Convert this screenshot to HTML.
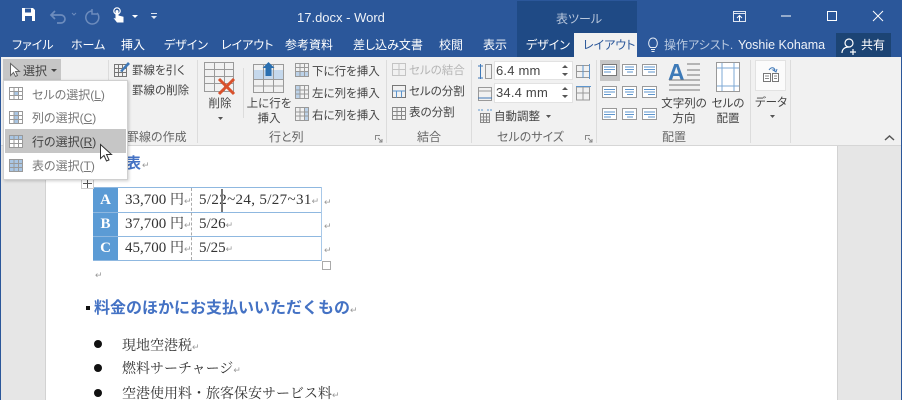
<!DOCTYPE html>
<html lang="ja"><head><meta charset="utf-8"><style>
html,body{margin:0;padding:0}
#r{position:relative;width:902px;height:400px;overflow:hidden;background:#e6e6e6;font-family:"Liberation Sans","Noto Sans CJK JP",sans-serif;color:#444}
#r div,#r span.a,#r svg{position:absolute}
.t{white-space:nowrap;font-size:12px;line-height:16px;font-feature-settings:"palt"}
.l{font-size:11.5px}
.w{color:#fff}
.c{text-align:center}
.sep{width:1px;background:#dcdcdc;top:60px;height:83px}
.g{color:#666;font-size:12px;line-height:14px;white-space:nowrap;top:130px;font-feature-settings:"palt"}
.s{font-family:"Liberation Serif","Noto Serif CJK SC","Noto Sans CJK JP",serif;color:#333;white-space:nowrap;font-size:15px;line-height:18px}
.j{font-size:14px}
.m{color:#999;font-size:9px;line-height:10px;font-family:"Liberation Sans",sans-serif}
</style></head><body><div id="r">

<div style="left:0;top:0;width:902px;height:57px;background:#2b579a"></div>
<div style="left:517px;top:1px;width:120px;height:56px;background:#1f4a85"></div>
<div class="t" style="left:556px;top:11px;color:#b9c7dc;font-size:12px">表ツール</div>
<div class="t w" style="left:297px;top:9px;font-size:13px;line-height:18px;color:#eef2f8">17.docx - Word</div>

<svg style="left:20px;top:6px" width="150" height="20" viewBox="0 0 150 20">
<path d="M2 2h11l2 2v11H2z" fill="#fff"/><rect x="5" y="2.500" width="6" height="4" fill="#2b579a"/><rect x="5" y="10" width="7" height="5" fill="#2b579a"/>
<path d="M32 9h9a4 4 0 0 1 0 8h-4M35 5l-4 4 4 4" fill="none" stroke="#6d8cbd" stroke-width="1.700"/>
<path d="M52 7l2 2 2-2" fill="none" stroke="#6d8cbd"/>
<path d="M72 5a6.500 6.500 0 1 0 5 2M72 3v5h5" fill="none" stroke="#6d8cbd" stroke-width="1.500"/>
<circle cx="97" cy="5" r="3.200" fill="none" stroke="#fff" stroke-width="1.200"/><path d="M95.500 5.500a1.500 1.500 0 0 1 3 0v4l5 1.200v5.800h-6.500l-3.500-4.500 2 .5z" fill="#fff"/><path d="M112 9h6l-3 3z" fill="#fff"/><path d="M131 7h6v1h-6zM131 10h6l-3 3z" fill="#dfe6f1"/>
</svg>

<svg style="left:730px;top:6px" width="170" height="20" viewBox="0 0 170 20">
<path d="M3.500 5.500h12v10h-12zM3.500 7.500h12" fill="none" stroke="#dfe6f1"/><path d="M9.500 15V10M7 12l2.500-2.500L12 12" fill="none" stroke="#fff"/>
<path d="M51 10h10" stroke="#fff"/><path d="M97.500 5.500h9v9h-9z" fill="none" stroke="#fff"/><path d="M143 5l10 10M153 5l-10 10" stroke="#fff"/>
</svg>

<div class="t w" style="left:12px;top:37px">ファイル</div>
<div class="t w" style="left:71px;top:37px">ホーム</div>
<div class="t w" style="left:121px;top:37px">挿入</div>
<div class="t w" style="left:164px;top:37px">デザイン</div>
<div class="t w" style="left:221px;top:37px">レイアウト</div>
<div class="t w" style="left:285px;top:37px">参考資料</div>
<div class="t w" style="left:353px;top:37px">差し込み文書</div>
<div class="t w" style="left:439px;top:37px">校閲</div>
<div class="t w" style="left:483px;top:37px">表示</div>
<div class="t w" style="left:526px;top:37px">デザイン</div>
<div style="left:574px;top:33px;width:63px;height:25px;background:#f1f1f1"></div>
<div class="t" style="left:583px;top:37px;color:#2b579a">レイアウト</div>
<svg style="left:646px;top:36px" width="14" height="18" viewBox="0 0 14 18"><path d="M4.500 11.500C1 8 3 2 7 2s6 6 2.500 9.500zM5 13.500h4M5.500 15.500h3" fill="none" stroke="#e6ecf5"/></svg>
<div class="t" style="left:664px;top:37px;color:#b9c9e0">操作アシスト.</div>
<div class="t w" style="left:738px;top:37px;color:#eef2f8;font-size:12.500px">Yoshie Kohama</div>
<div style="left:836px;top:33px;width:55px;height:24px;background:#1c4474"></div>
<svg style="left:841px;top:37px" width="18" height="18" viewBox="0 0 18 18"><circle cx="8" cy="6" r="4" fill="none" stroke="#fff" stroke-width="1.200"/><path d="M1 16c0-4 3-6 7-6M12 12v6M9 15h6" fill="none" stroke="#fff" stroke-width="1.200"/></svg>
<div class="t w" style="left:861px;top:37px">共有</div>

<!-- ribbon -->
<div style="left:0;top:57px;width:902px;height:88px;background:#f1f1f1;border-bottom:1px solid #d6d6d6"></div>
<div class="sep" style="left:108px"></div><div class="sep" style="left:197px"></div><div class="sep" style="left:386px"></div><div class="sep" style="left:471px"></div><div class="sep" style="left:596px"></div><div class="sep" style="left:750px"></div><div class="sep" style="left:790px"></div>
<div style="left:3px;top:59px;width:58px;height:22px;background:#c6c6c6"></div>
<svg style="left:8px;top:62px" width="14" height="17" viewBox="0 0 14 17"><path d="M2.500 1.500v12l3-3 2 4 2-1-2-4h4z" fill="#fff" stroke="#666"/></svg>
<div class="t" style="left:23px;top:63px;color:#444">選択</div>
<svg style="left:51px;top:69px" width="7" height="4"><path d="M0 0h6L3 3z" fill="#444"/></svg>

<svg style="left:113px;top:60px" width="18" height="18" viewBox="0 0 18 18"><path d="M1.500 4.500h12v12h-12zM1.500 8.500h12M1.500 12.500h12M5.500 4.500v12M9.500 4.500v12" fill="none" stroke="#777"/><path d="M7 11L15 2l2 2-8 8z" fill="#3e78b8"/></svg>
<div class="t l" style="left:132px;top:63px">罫線を引く</div>
<div class="t l" style="left:132px;top:83px">罫線の削除</div>
<div class="g" style="left:127px">罫線の作成</div>

<svg style="left:203px;top:61px" width="34" height="36" viewBox="0 0 34 36"><path d="M1.500 1.500h29v29h-29zM1.500 8.500h29M1.500 15.500h29M1.500 22.500h29M11.500 1.500v29M21.500 1.500v29" fill="none" stroke="#9a9a9a"/><path d="M16 18l15 15M31 18L16 33" stroke="#d9512c" stroke-width="3"/></svg>
<div class="t l c" style="left:204px;top:96px;width:32px">削除</div>
<svg style="left:218px;top:117px" width="6" height="4"><path d="M0 0h5L2.500 3z" fill="#555"/></svg>
<div style="left:243px;top:68px;width:1px;height:50px;background:#dcdcdc"></div>

<svg style="left:252px;top:61px" width="34" height="33" viewBox="0 0 34 33"><rect x="1" y="9" width="30" height="9" fill="#c5d8ec"/><path d="M1.500 3.500h30v28h-30zM1.500 18.500h30M1.500 25h30M11.500 3.500v28M21.500 3.500v28" fill="none" stroke="#9a9a9a"/><path d="M16.500 1l6 6h-3v8h-6V7h-3z" fill="#2a6fb0"/></svg>
<div class="t l c" style="left:246px;top:97px;width:46px;line-height:15px">上に行を<br>挿入</div>

<svg style="left:294px;top:62px" width="16" height="60" viewBox="0 0 16 60">
<rect x="1" y="10" width="14" height="5" fill="#bcd2e9"/><rect x="2" y="23" width="4" height="14" fill="#bcd2e9"/><rect x="10" y="45" width="5" height="14" fill="#bcd2e9"/>
<g fill="none" stroke="#999"><path d="M1.500 1.500h13v13h-13zM1.500 5.500h13M1.500 9.500h13M6 1.500v13M10.500 1.500v13"/><path d="M1.500 23.500h13v13h-13zM1.500 28h13M1.500 32h13M6 23.500v13M10.500 23.500v13"/><path d="M1.500 45.500h13v13h-13zM1.500 50h13M1.500 54h13M6 45.500v13M10.500 45.500v13"/></g></svg>
<div class="t l" style="left:312px;top:64px">下に行を挿入</div>
<div class="t l" style="left:312px;top:86px">左に列を挿入</div>
<div class="t l" style="left:312px;top:108px">右に列を挿入</div>
<div class="g" style="left:269px">行と列</div>
<svg style="left:375px;top:135px" width="8" height="8"><path d="M.5 5V.5H5M3 3l4 4M7 4v3H4" fill="none" stroke="#888"/></svg>

<svg style="left:391px;top:62px" width="16" height="60" viewBox="0 0 16 60"><path d="M1.500 1.500h13v12h-13zM1.500 7.500h13M8 1.500v12" fill="none" stroke="#c4c4c4"/><path d="M1.500 23.500h13v12h-13z" fill="none" stroke="#777"/><path d="M1.500 29h13M5.500 29v6.500M10.500 29v6.500" fill="none" stroke="#5d95cd"/><path d="M1.500 45.500h13v12h-13zM1.500 49.500h13M1.500 53.500h13M6 45.500v12M10.500 45.500v12" fill="none" stroke="#888"/></svg>
<div class="t l" style="left:409px;top:63px;color:#b5b5b5">セルの結合</div>
<div class="t l" style="left:409px;top:84px">セルの分割</div>
<div class="t l" style="left:409px;top:105px">表の分割</div>
<div class="g" style="left:417px">結合</div>

<svg style="left:477px;top:63px" width="16" height="40" viewBox="0 0 16 40"><path d="M8.500 1.500h6v14h-6z" fill="none" stroke="#999"/><path d="M3.500 1v15M1 3h5M1 15h5" fill="none" stroke="#3e78b8"/><path d="M1.500 24.500h13v13h-13zM1.500 28h13" fill="none" stroke="#999"/><path d="M1 35h14" stroke="#3e78b8"/></svg>
<div style="left:494px;top:61px;width:79px;height:19px;background:#fff;border:1px solid #e2e2e2;box-sizing:border-box"></div>
<div style="left:494px;top:83px;width:79px;height:20px;background:#fff;border:1px solid #e2e2e2;box-sizing:border-box"></div>
<div class="t" style="left:496px;top:63px;font-size:13px;letter-spacing:.2px">6.4 mm</div>
<div class="t" style="left:496px;top:85px;font-size:13px;letter-spacing:.2px">34.4 mm</div>
<svg style="left:561px;top:64px" width="9" height="36" viewBox="0 0 9 36"><path d="M1 4l3-3 3 3zM1 9l3 3 3-3zM1 26l3-3 3 3zM1 31l3 3 3-3z" fill="#555"/></svg>
<svg style="left:575px;top:64px" width="17" height="38" viewBox="0 0 17 38"><path d="M1.500 1.500h13v12h-13zM1.500 7.500h13" fill="none" stroke="#999"/><path d="M8 1v13M14.500 0v15" stroke="#5d95cd"/><path d="M1.500 23h13v13h-13zM1.500 29h13M8 23v13" fill="none" stroke="#999"/><path d="M1 22.500h15" stroke="#5d95cd"/></svg>
<svg style="left:477px;top:108px" width="16" height="16" viewBox="0 0 16 16"><path d="M3.500 5.500h9v9h-9zM3.500 9h9M3.500 12h9M6.500 5.500v9M9.500 5.500v9" fill="none" stroke="#888"/><path d="M1 2h5M10 2h5" stroke="#5d95cd" stroke-dasharray="2 1"/></svg>
<div class="t l" style="left:494px;top:109px">自動調整</div>
<svg style="left:546px;top:115px" width="6" height="4"><path d="M0 0h5L2.500 3z" fill="#555"/></svg>
<div class="g" style="left:497px">セルのサイズ</div>
<svg style="left:585px;top:135px" width="8" height="8"><path d="M.5 5V.5H5M3 3l4 4M7 4v3H4" fill="none" stroke="#888"/></svg>

<div style="left:600px;top:60px;width:20px;height:21px;background:#c6c6c6"></div>
<svg style="left:600px;top:60px" width="60" height="62" viewBox="0 0 60 62">
<g><rect x="2.500" y="4.500" width="14" height="11" fill="#fff" stroke="#777"/><path d="M4 7h11M4 9.500h11M4 12h7" stroke="#5d95cd"/></g>
<rect x="22.500" y="4.500" width="14" height="11" fill="#fff" stroke="#999"/><path d="M25 7h9M25 9.500h9M27 12h6" stroke="#5d95cd"/>
<rect x="42.500" y="4.500" width="14" height="11" fill="#fff" stroke="#999"/><path d="M44 7h11M44 9.500h11M48 12h7" stroke="#5d95cd"/>
<rect x="2.500" y="26.500" width="14" height="11" fill="#fff" stroke="#999"/><path d="M4 29.500h11M4 32h11M4 34.500h7" stroke="#5d95cd"/>
<rect x="22.500" y="26.500" width="14" height="11" fill="#fff" stroke="#999"/><path d="M25 29.500h9M25 32h9M27 34.500h6" stroke="#5d95cd"/>
<rect x="42.500" y="26.500" width="14" height="11" fill="#fff" stroke="#999"/><path d="M44 29.500h11M44 32h11M48 34.500h7" stroke="#5d95cd"/>
<rect x="2.500" y="48.500" width="14" height="11" fill="#fff" stroke="#999"/><path d="M4 52h11M4 54.500h11M4 57h7" stroke="#5d95cd"/>
<rect x="22.500" y="48.500" width="14" height="11" fill="#fff" stroke="#999"/><path d="M25 52h9M25 54.500h9M27 57h6" stroke="#5d95cd"/>
<rect x="42.500" y="48.500" width="14" height="11" fill="#fff" stroke="#999"/><path d="M44 52h11M44 54.500h11M48 57h7" stroke="#5d95cd"/>
</svg>
<div class="t" style="left:668px;top:59px;font:bold 23px/26px 'Liberation Sans',sans-serif;color:#3d7ab8">A</div>
<svg style="left:668px;top:62px" width="34" height="32" viewBox="0 0 34 32"><path d="M19 2h13M19 8h13M19 13h13M1 18h31M1 23h31M1 28h31" stroke="#777" fill="none"/></svg>
<div class="t l c" style="left:660px;top:97px;width:48px;line-height:15px">文字列の<br>方向</div>
<svg style="left:716px;top:62px" width="24" height="30" viewBox="0 0 24 30"><rect x=".5" y=".5" width="23" height="29" fill="#fff" stroke="#999"/><path d="M6 1v28M18 1v28M1 6h22M1 24h22" stroke="#7da9d6"/></svg>
<div class="t l c" style="left:710px;top:97px;width:36px;line-height:15px">セルの<br>配置</div>
<div class="g" style="left:662px">配置</div>

<div style="left:755px;top:60px;width:31px;height:31px;background:#fbfbfb;border:1px solid #e2e2e2;box-sizing:border-box"></div>
<svg style="left:762px;top:67px" width="18" height="16" viewBox="0 0 18 16"><path d="M1.500 6.500h7v8h-7zM10.500 6.500h6v8h-6z" fill="#fff" stroke="#777"/><path d="M3 9h4M3 11.500h4M12 9h3M12 11.500h3" stroke="#888"/><path d="M7 3c2-3 5-3 6 0l-2 0 3 2 1-3" fill="none" stroke="#3e78b8"/></svg>
<div class="t l c" style="left:750px;top:95px;width:42px">データ</div>
<svg style="left:770px;top:115px" width="6" height="4"><path d="M0 0h5L2.500 3z" fill="#555"/></svg>
<svg style="left:884px;top:134px" width="12" height="8" viewBox="0 0 12 8"><path d="M1 6l4.500-4L10 6" fill="none" stroke="#555" stroke-width="1.500"/></svg>

<!-- page -->
<div style="left:45px;top:146px;width:793px;height:254px;background:#fff;border-left:1px solid #d2d2d2;border-right:1px solid #d2d2d2;box-sizing:border-box"></div>
<div style="left:0;top:57px;width:1px;height:343px;background:#2b579a"></div>
<div style="left:901px;top:57px;width:1px;height:343px;background:#2b579a"></div>

<div class="t" style="left:126px;top:154px;font-size:15px;line-height:20px;font-weight:bold;color:#4472c4">表<span class="m" style="font-weight:normal;margin-left:1px">↵</span></div>

<!-- table -->
<div style="left:93px;top:187px;width:25px;height:74px;background:#5b9bd5"></div>
<div style="left:93px;top:187px;width:229px;height:1px;background:#8fb8e0"></div>
<div style="left:93px;top:212px;width:229px;height:1px;background:#8fb8e0"></div>
<div style="left:93px;top:236px;width:229px;height:1px;background:#8fb8e0"></div>
<div style="left:93px;top:260px;width:229px;height:1px;background:#8fb8e0"></div>
<div style="left:321px;top:187px;width:1px;height:74px;background:#a8c8e8"></div>
<div style="left:191px;top:188px;width:0;height:72px;border-left:1px dashed #aaa"></div>
<div style="left:322px;top:261px;width:7px;height:7px;background:#fff;border:1px solid #aaa"></div>
<div style="left:81px;top:178px;width:11px;height:9px;background:#fff;border:1px solid #ccc"></div>
<svg style="left:83px;top:179px" width="9" height="9" viewBox="0 0 9 9"><path d="M4.500 0v9M0 4.500h9" stroke="#555"/></svg>
<div class="s w" style="left:93px;top:191px;width:25px;text-align:center;font-weight:bold;color:#fff">A</div>
<div class="s w" style="left:93px;top:215px;width:25px;text-align:center;font-weight:bold;color:#fff">B</div>
<div class="s w" style="left:93px;top:239px;width:25px;text-align:center;font-weight:bold;color:#fff">C</div>
<div class="s" style="left:125px;top:191px">33,700 <span class="j">円</span><span class="m">↵</span></div>
<div class="s" style="left:125px;top:215px">37,700 <span class="j">円</span><span class="m">↵</span></div>
<div class="s" style="left:125px;top:239px">45,700 <span class="j">円</span><span class="m">↵</span></div>
<div class="s" style="left:199px;top:191px;letter-spacing:.35px">5/22~24, 5/27~31<span class="m">↵</span></div>
<div class="s" style="left:199px;top:215px">5/26<span class="m">↵</span></div>
<div class="s" style="left:199px;top:239px">5/25<span class="m">↵</span></div>
<div style="left:221px;top:189px;width:2px;height:23px;background:#777"></div>
<div class="m" style="left:324px;top:197px">↵</div><div class="m" style="left:324px;top:221px">↵</div><div class="m" style="left:324px;top:245px">↵</div>
<div class="m" style="left:95px;top:270px">↵</div>

<div style="left:86px;top:306px;width:4px;height:4px;background:#111"></div>
<div class="t" style="left:94px;top:299px;font-size:16px;line-height:20px;font-weight:bold;color:#4472c4;font-feature-settings:normal">料金のほかにお支払いいただくもの<span class="m" style="font-weight:normal">↵</span></div>
<div style="left:94px;top:340px;width:8px;height:8px;border-radius:50%;background:#111"></div>
<div style="left:94px;top:364px;width:8px;height:8px;border-radius:50%;background:#111"></div>
<div style="left:94px;top:389px;width:8px;height:8px;border-radius:50%;background:#111"></div>
<div class="s j" style="left:122px;top:338px">現地空港税<span class="m">↵</span></div>
<div class="s j" style="left:122px;top:361px">燃料サーチャージ<span class="m">↵</span></div>
<div class="s j" style="left:122px;top:386px">空港使用料・旅客保安サービス料<span class="m">↵</span></div>

<!-- dropdown -->
<div style="left:3px;top:80px;width:125px;height:100px;background:#fff;border:1px solid #d0d0d0;box-sizing:border-box;box-shadow:1px 1px 3px rgba(0,0,0,.2)"></div>
<div style="left:5px;top:129px;width:121px;height:24px;background:#c6c6c6"></div>
<svg style="left:8px;top:86px" width="16" height="88" viewBox="0 0 16 88">
<rect x="1" y="1" width="14" height="13" fill="#fff"/><rect x="1" y="25" width="14" height="13" fill="#fff"/><rect x="1" y="49" width="14" height="13" fill="#fff"/><rect x="1" y="73" width="14" height="13" fill="#a9c6e4"/>
<rect x="6" y="6" width="4" height="3" fill="#a9c6e4"/><rect x="6" y="26" width="4" height="11" fill="#a9c6e4"/><rect x="2" y="50" width="12" height="3" fill="#a9c6e4"/>
<g fill="none" stroke="#999"><path d="M1.500 1.500h13v12h-13zM1.500 5.500h13M1.500 9.500h13M6 1.500v12M10.500 1.500v12"/><path d="M1.500 25.500h13v12h-13zM1.500 29.500h13M1.500 33.500h13M6 25.500v12M10.500 25.500v12"/><path d="M1.500 49.500h13v12h-13zM1.500 53.500h13M1.500 57.500h13M6 49.500v12M10.500 49.500v12"/><path d="M1.500 73.500h13v12h-13zM1.500 77.500h13M1.500 81.500h13M6 73.500v12M10.500 73.500v12"/></g></svg>
<div class="t" style="left:32px;top:87px;color:#777">セルの選択(<u>L</u>)</div>
<div class="t" style="left:32px;top:110px;color:#777">列の選択(<u>C</u>)</div>
<div class="t" style="left:32px;top:134px;color:#444">行の選択(<u>R</u>)</div>
<div class="t" style="left:32px;top:158px;color:#777">表の選択(<u>T</u>)</div>
<svg style="left:99px;top:143px" width="14" height="20" viewBox="0 0 14 20"><path d="M1.500 1.500v14l3.500-3 2.500 5.500 2.500-1-2.500-5.500h5z" fill="#fff" stroke="#333"/></svg>
</div></body></html>
